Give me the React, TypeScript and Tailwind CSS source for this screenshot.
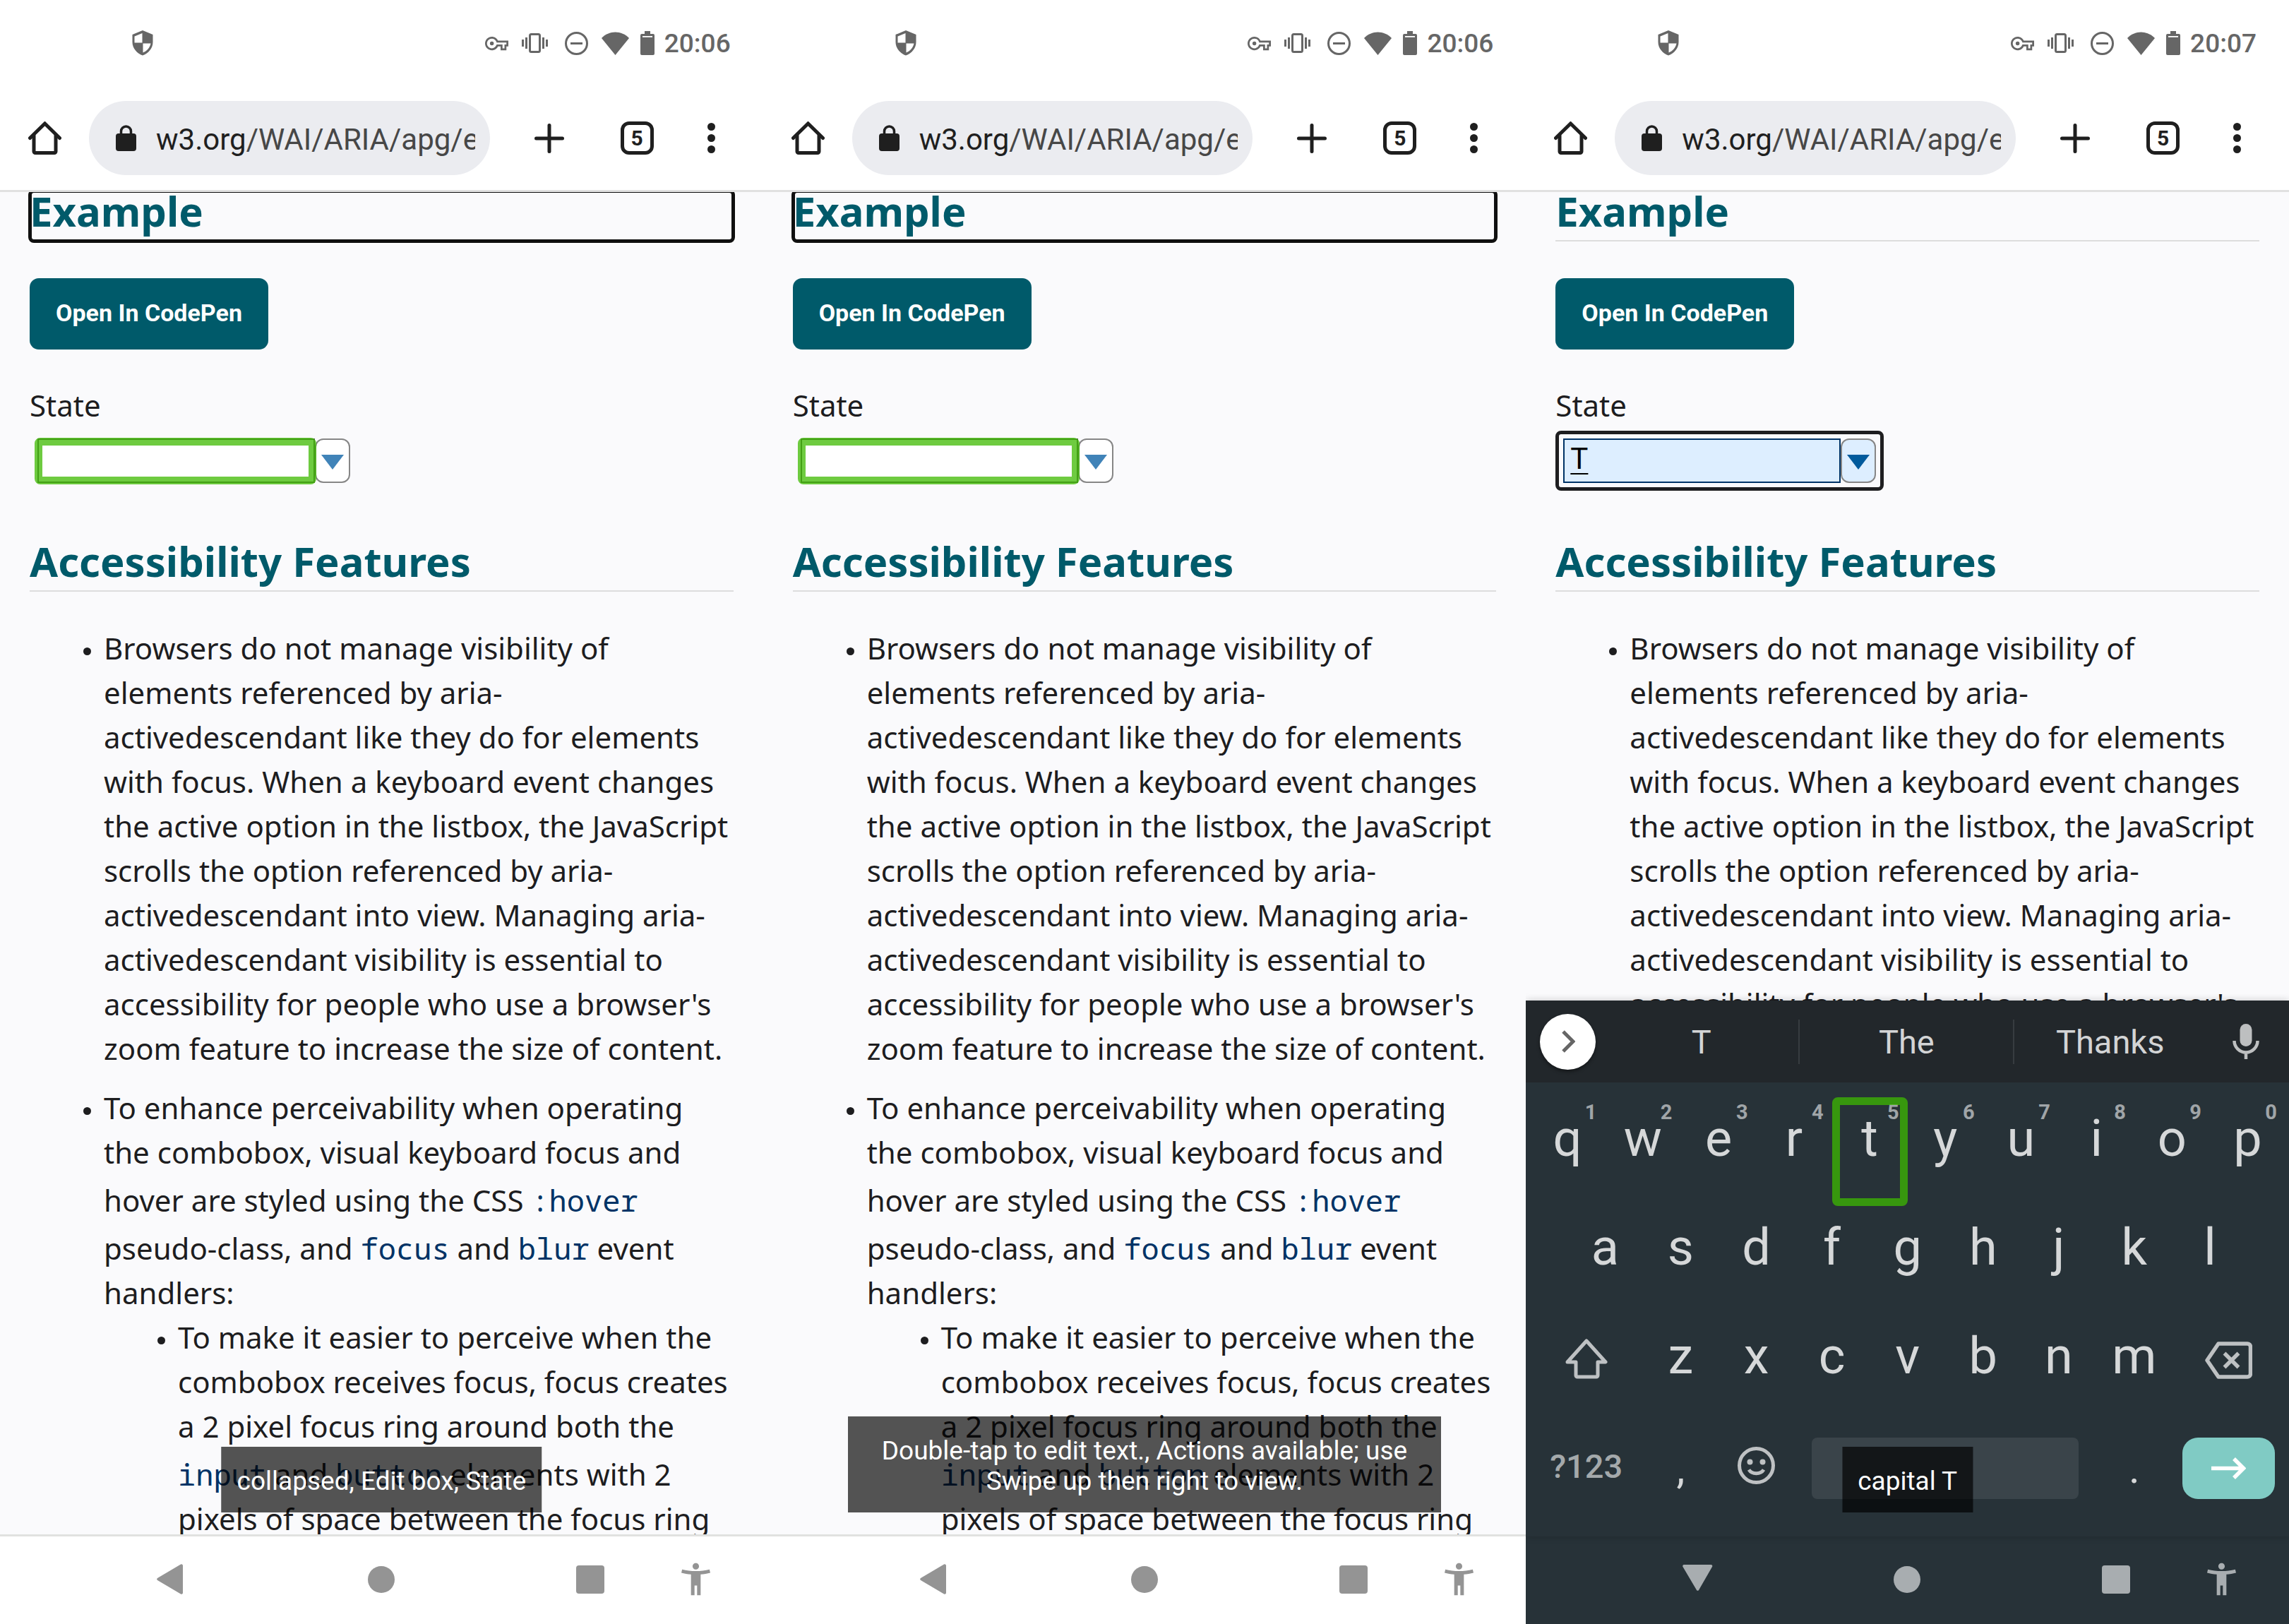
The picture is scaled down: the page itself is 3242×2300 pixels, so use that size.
import React from "react";

const ROBOTO = "font-['Roboto','Liberation_Sans',sans-serif]";

function ShieldIcon() {
  return (
    <svg className="h-9 w-[30px]" viewBox="0 0 30 36" aria-hidden="true">
      <path fill="#666" d="M15 0L29.5 6v10.500c0 8.500-6 16-14.500 19C6.500 32.500.500 25 .500 16.500V6z" />
      <path fill="#fff" d="M14.500 4L3.500 8.500V17.500h11zM15.500 18.500h11c-1.200 6-5.500 11-11 13z" />
    </svg>
  );
}

function StatusIcons() {
  return (
    <div className="flex items-center">
      <svg className="mr-[19px] h-[33px] w-[33px]" viewBox="0 0 24 24" fill="#666" aria-hidden="true">
        <path d="M22 19h-6v-4h-2.680c-1.140 2.420-3.600 4-6.320 4-3.860 0-7-3.140-7-7s3.140-7 7-7c2.720 0 5.170 1.580 6.320 4H24v6h-2v4zm-4-2h2v-4h2v-2H11.940l-.230-.670C11.010 8.340 9.110 7 7 7c-2.760 0-5 2.240-5 5s2.240 5 5 5c2.110 0 4.010-1.340 4.710-3.330l.230-.670H18v4zM7 14a2 2 0 1 1 0-4 2 2 0 0 1 0 4z" />
      </svg>
      <svg className="mr-6 h-7 w-[37px]" viewBox="0 0 37 28" fill="#666" aria-hidden="true">
        <rect x="11.500" y="1.500" width="14" height="25" rx="2" fill="none" stroke="#666" strokeWidth="3" />
        <path d="M0 9h3v10H0zM5 6h3v16H5zM29 6h3v16h-3zM34 9h3v10h-3z" />
      </svg>
      <svg className="mr-[19px] h-[33px] w-[33px]" viewBox="0 0 33 33" fill="none" stroke="#666" strokeWidth="3" aria-hidden="true">
        <circle cx="16.500" cy="16.500" r="15" />
        <path d="M8 16.500h17" />
      </svg>
      <svg className="mr-4 h-[33px] w-[39px]" viewBox="0 0 39 33" fill="#666" aria-hidden="true">
        <path d="M0 9C10.500-2.500 28.500-2.500 39 9L19.500 33z" />
      </svg>
      <svg className="mr-[14px] h-[34px] w-5" viewBox="0 0 20 34" fill="#666" aria-hidden="true">
        <path d="M6 0h8v4h4a2 2 0 0 1 2 2v26a2 2 0 0 1-2 2H2a2 2 0 0 1-2-2V6a2 2 0 0 1 2-2h4z" />
        <path fill="#fff" d="M3 7h14v1.800H3z" />
      </svg>
    </div>
  );
}

function StatusBar({ time }: { time: string }) {
  return (
    <div className="flex h-[122px] items-center justify-between bg-white pl-[187px] pr-[46px]">
      <ShieldIcon />
      <div className="flex items-center">
        <StatusIcons />
        <time className="pt-0.5 text-[37px] leading-[44px] font-medium text-[#666]">{time}</time>
      </div>
    </div>
  );
}

function BrowserBar() {
  return (
    <div className="flex h-[147px] items-center bg-white pl-10 pr-[68px]">
      <button type="button" aria-label="Home" className="mr-[39px] shrink-0">
        <svg className="size-[47px]" viewBox="0 0 47 47" fill="none" stroke="#1f1f1f" strokeWidth="5" strokeLinecap="round" aria-hidden="true">
          <path d="M2.500 23.500L23.500 3L44.500 23.500" strokeLinejoin="miter" />
          <path d="M8 20V42.500a2 2 0 0 0 2 2H37a2 2 0 0 0 2-2V20" />
        </svg>
      </button>
      <button
        type="button"
        aria-label="Address bar"
        className="flex h-[105px] min-w-0 flex-1 items-center gap-7 rounded-full bg-[#ebecf0] pl-[38px] pr-[21px] text-left"
      >
        <svg className="h-[37px] w-[29px] shrink-0" viewBox="0 0 29 37" aria-hidden="true">
          <rect y="12" width="29" height="25" rx="4" fill="#1f1f1f" />
          <path d="M7.500 14V9a7 7 0 0 1 14 0v5" fill="none" stroke="#1f1f1f" strokeWidth="3.500" />
        </svg>
        <span className="min-w-0 flex-1 overflow-hidden pt-1 text-[42px] leading-[56px] whitespace-nowrap text-[#474747]">
          <span className="text-[#1f1f1f]">w3.org</span>/WAI/ARIA/apg/e
        </span>
      </button>
      <button type="button" aria-label="New tab" className="ml-[63px] shrink-0">
        <svg className="size-[42px]" viewBox="0 0 42 42" stroke="#1f1f1f" strokeWidth="5" strokeLinecap="round" aria-hidden="true">
          <path d="M21 2.500v37M2.500 21h37" />
        </svg>
      </button>
      <button
        type="button"
        aria-label="5 open tabs"
        className="ml-20 flex size-[47px] shrink-0 items-center justify-center rounded-xl border-5 border-[#1f1f1f] text-[30px] leading-none font-bold text-[#1f1f1f]"
      >
        5
      </button>
      <button type="button" aria-label="More options" className="ml-[76px] flex shrink-0 flex-col gap-[5px]">
        <span className="size-[11px] rounded-full bg-[#1f1f1f]" />
        <span className="size-[11px] rounded-full bg-[#1f1f1f]" />
        <span className="size-[11px] rounded-full bg-[#1f1f1f]" />
      </button>
    </div>
  );
}

const HEADING = "relative border-b-2 border-[#ddd] pb-[2px] text-[58px] leading-[78px] font-bold text-[#005a6a]";
const CODE = "inline-block pt-[13px] font-['Noto_Sans_Mono','DejaVu_Sans_Mono',monospace] text-[42px] leading-[48px] text-[#036]";
const BULLET =
  "relative before:absolute before:top-[31px] before:-left-[29px] before:size-[11px] before:rounded-full before:bg-[#1d1d1f] before:content-['']";

function Combobox({ id, active }: { id: string; active: boolean }) {
  return (
    <div
      className={
        active
          ? "flex w-fit rounded-lg border-5 border-[#1e1e20] p-[6px]"
          : "flex w-fit rounded-lg border-5 border-transparent p-[6px]"
      }
    >
      <div className="relative">
        <input
          id={id}
          type="text"
          role="combobox"
          aria-expanded="false"
          aria-controls={id + "-list"}
          defaultValue={active ? "T" : ""}
          className={
            active
              ? "block h-[63px] w-[393px] border-2 border-[#036] bg-[#def] px-2 pb-1.5 text-[42px] text-black underline decoration-2 underline-offset-6 outline-none"
              : "block h-[63px] w-[393px] border-2 border-[#555] bg-white px-2 pb-1.5 text-[42px] outline-none"
          }
        />
        {!active && (
          <span className="pointer-events-none absolute -top-px -right-0.5 -bottom-0.5 -left-1 rounded-lg border-11 border-[rgba(62,185,0,0.75)]" />
        )}
      </div>
      <button
        type="button"
        tabIndex={-1}
        aria-label="States"
        className={
          active
            ? "flex h-[63px] w-[50px] items-center justify-center rounded-xl border-2 border-[#868686] bg-[#def] pt-1"
            : "flex h-[63px] w-[50px] items-center justify-center rounded-xl border-2 border-[#868686] bg-white pt-1"
        }
      >
        <svg className="h-[21px] w-8" viewBox="0 0 32 21" aria-hidden="true">
          <path d="M0 0H32L16 21z" fill={active ? "#005a9c" : "#4083b8"} />
        </svg>
      </button>
    </div>
  );
}

function ExamplePage({ id, headingFocused, active }: { id: string; headingFocused: boolean; active: boolean }) {
  return (
    <main className="min-h-0 flex-1 overflow-hidden border-t-3 border-[#e1e1e1] bg-[#fafafc] px-[42px] font-['Noto_Sans',sans-serif] text-[42px] leading-[63px] text-[#1d1d1f]">
      <h2 className={HEADING + " -mt-3"}>
        Example
        {headingFocused && (
          <span className="absolute -inset-x-0.5 top-2 -bottom-1 rounded-lg border-5 border-[#101010] shadow-[0_0_0_2px_#fff]" />
        )}
      </h2>
      <button
        type="button"
        className={"mt-[52px] block h-[101px] rounded-[13px] bg-[#005a6a] px-[37px] pb-1 text-[34px] leading-[44px] font-bold text-white " + ROBOTO}
      >
        Open In CodePen
      </button>
      <label htmlFor={id} className="mt-[47px] mb-[5px] block">
        State
      </label>
      <div className={ROBOTO}>
        <Combobox id={id} active={active} />
      </div>
      <h2 className={HEADING + " mt-[61px]"}>Accessibility Features</h2>
      <ul className="mt-12 flex flex-col gap-[21px] pl-[105px]">
        <li className={BULLET}>
          Browsers do not manage visibility of elements referenced by aria-activedescendant like they do for elements
          with focus. When a keyboard event changes the active option in the listbox, the JavaScript scrolls the option
          referenced by aria-activedescendant into view. Managing aria-activedescendant visibility is essential to
          accessibility for people who use a browser's zoom feature to increase the size of content.
        </li>
        <li className={BULLET}>
          To enhance perceivability when operating the combobox, visual keyboard focus and hover are styled using the
          CSS <code className={CODE}>:hover</code> pseudo-class, and <code className={CODE}>focus</code> and{" "}
          <code className={CODE}>blur</code> event handlers:
          <ul className="pl-[105px]">
            <li className={BULLET}>
              To make it easier to perceive when the combobox receives focus, focus creates a 2 pixel focus ring around
              both the <code className={CODE}>input</code> and <code className={CODE}>button</code> elements with 2
              pixels of space between the focus ring
            </li>
          </ul>
        </li>
      </ul>
    </main>
  );
}

function SystemNav({ keyboardOpen }: { keyboardOpen: boolean }) {
  return (
    <nav
      aria-label="System"
      className={
        keyboardOpen
          ? "flex h-[124px] shrink-0 items-center bg-[#273238] pb-[3px] pl-[222px] text-[#a8adb0]"
          : "flex h-[127px] shrink-0 items-center border-t-3 border-[#e1e2e0] bg-white pb-[3px] pl-[222px] text-[#949494]"
      }
    >
      <button type="button" aria-label={keyboardOpen ? "Hide keyboard" : "Back"}>
        <svg className="size-[43px]" viewBox="0 0 43 43" fill="currentColor" aria-hidden="true">
          {keyboardOpen ? (
            <path d="M2 1h38a2 2 0 0 1 2 3L23 37a2 2 0 0 1-3 0L.500 4A2 2 0 0 1 2 1z" />
          ) : (
            <path d="M34 .500a2 2 0 0 1 3 1.500v39a2 2 0 0 1-3 1.500L1 23a2 2 0 0 1 0-3z" />
          )}
        </svg>
      </button>
      <button type="button" aria-label="Home screen" className="ml-64 size-[38px] rounded-full bg-current" />
      <button type="button" aria-label="Overview" className="ml-[257px] h-10 w-10 rounded-[4px] bg-current" />
      <button type="button" aria-label="Accessibility" className="ml-[109px]">
        <svg className="h-[47px] w-[41px]" viewBox="3 2 18 20" fill="currentColor" aria-hidden="true">
          <path d="M20.500 6c-2.610.700-5.670 1-8.500 1s-5.890-.300-8.500-1L3 8c1.860.500 4 .830 6 1v13h2.200v-6h1.600v6H15V9c2-.170 4.140-.500 6-1l-.500-2zM12 6c1.100 0 2-.900 2-2s-.900-2-2-2-2 .900-2 2 .900 2 2 2z" />
        </svg>
      </button>
    </nav>
  );
}

const KEY_ROW = "grid h-[154px] grid-cols-[repeat(20,minmax(0,1fr))]";
const LETTER = "relative col-span-2 flex items-center justify-center pb-9 text-[72px] leading-[84px] text-[#d6d8d9]";

function Keyboard() {
  const top = "qwertyuiop".split("");
  const home = "asdfghjkl".split("");
  const bottom = "zxcvbnm".split("");
  return (
    <section aria-label="Keyboard" className="relative shrink-0 bg-[#273238] shadow-[0_0_10px_rgba(0,0,0,0.2)]">
      <div className="flex h-[116px] items-center bg-[#22272b] pl-5 text-[47px] leading-[56px] text-[#d3d4d5]">
        <button
          type="button"
          aria-label="Show toolbar"
          className="flex size-[79px] shrink-0 items-center justify-center rounded-full bg-white shadow-[0_3px_5px_rgba(0,0,0,0.4)]"
        >
          <svg className="h-8 w-5" viewBox="0 0 20 32" fill="none" stroke="#666" strokeWidth="5" aria-hidden="true">
            <path d="M3 2L17 16L3 30" />
          </svg>
        </button>
        <div className="ml-3 flex min-w-0 flex-1 items-center">
          <button type="button" className="h-[63px] w-[275px] pt-0.5">T</button>
          <button type="button" className="h-[63px] w-[306px] border-x-2 border-[#373c40] pt-0.5">The</button>
          <button type="button" className="h-[63px] flex-1 pt-0.5">Thanks</button>
        </div>
        <button type="button" aria-label="Voice input" className="ml-[38px] mr-[42px] shrink-0">
          <svg className="h-[50px] w-[38px]" viewBox="0 0 38 50" aria-hidden="true">
            <rect x="10.500" width="17" height="32" rx="8.500" fill="#bdbfc0" />
            <path d="M2.500 24a16.500 16.500 0 0 0 33 0M19 40v10" fill="none" stroke="#bdbfc0" strokeWidth="4.500" />
          </svg>
        </button>
      </div>
      <div className="px-[5px] pt-[21px] pb-[33px]">
        <div className={KEY_ROW}>
          {top.map((letter, i) => (
            <button key={letter} type="button" className={LETTER}>
              {letter}
              <span className="absolute top-[6px] right-3 text-[29px] leading-[30px] font-bold text-[#a0a5a8]">
                {(i + 1) % 10}
              </span>
              {letter === "t" && (
                <span className="absolute inset-0 rounded-lg border-11 border-[rgba(62,185,0,0.75)]" />
              )}
            </button>
          ))}
        </div>
        <div className={KEY_ROW}>
          <span />
          {home.map((letter) => (
            <button key={letter} type="button" className={LETTER}>
              {letter}
            </button>
          ))}
        </div>
        <div className={KEY_ROW}>
          <button type="button" aria-label="Shift" className="col-span-3 flex items-center justify-center pb-[30px]">
            <svg className="h-[58px] w-[60px]" viewBox="0 0 60 58" fill="none" stroke="#bec1c3" strokeWidth="5" strokeLinejoin="round" aria-hidden="true">
              <path d="M30 4L57 34H46V53a2 2 0 0 1-2 2H17a2 2 0 0 1-2-2V34H3z" />
            </svg>
          </button>
          {bottom.map((letter) => (
            <button key={letter} type="button" className={LETTER}>
              {letter}
            </button>
          ))}
          <button type="button" aria-label="Delete" className="col-span-3 flex items-center justify-center pb-[26px]">
            <svg className="h-[53px] w-[67px]" viewBox="0 0 67 53" fill="none" stroke="#bec1c3" strokeWidth="5.500" strokeLinejoin="round" aria-hidden="true">
              <path d="M19 3H60a4.500 4.500 0 0 1 4.500 4.500V45.500a4.500 4.500 0 0 1-4.500 4.500H19L3 26.500z" />
              <path d="M27.500 16.500l20 20M47.500 16.500l-20 20" />
            </svg>
          </button>
        </div>
        <div className="grid h-[127px] grid-cols-[repeat(20,minmax(0,1fr))] items-center text-[60px] leading-[72px] text-[#d6d8d9]">
          <button type="button" className="col-span-3 pb-[6px] text-[47px] leading-[56px] font-medium text-[#a4a9ab]">
            ?123
          </button>
          <button type="button" className="col-span-2">,</button>
          <button type="button" aria-label="Emoji" className="col-span-2 flex justify-center pb-2">
            <svg className="size-[53px]" viewBox="0 0 53 53" fill="#bec1c3" aria-hidden="true">
              <circle cx="26.500" cy="26.500" r="24" fill="none" stroke="#bec1c3" strokeWidth="5" />
              <circle cx="17.500" cy="21.500" r="4" />
              <circle cx="35.500" cy="21.500" r="4" />
              <path d="M16 32.500c4.500 7 16.500 7 21 0" fill="none" stroke="#bec1c3" strokeWidth="5" />
            </svg>
          </button>
          <button type="button" aria-label="Space" className="col-span-8 mx-[25px] h-[87px] rounded-lg bg-[#3a444a]" />
          <button type="button" className="col-span-2">.</button>
          <button type="button" aria-label="Enter" className="col-span-3 mx-[15px] flex h-[87px] items-center justify-center rounded-[22px] bg-[#80cbc4]">
            <svg className="h-[31px] w-[49px]" viewBox="0 0 49 31" fill="none" stroke="#fff" strokeWidth="5.500" aria-hidden="true">
              <path d="M0 15.500H46M32 2l13.500 13.500L32 29" />
            </svg>
          </button>
        </div>
      </div>
    </section>
  );
}

function Toast({ children, wide }: { children: React.ReactNode; wide?: boolean }) {
  return (
    <p
      role="status"
      className={
        wide
          ? "absolute bottom-[158px] left-1/2 w-[840px] -translate-x-1/2 bg-black/67 px-[22px] pt-[27px] pb-[23px] text-center text-[37px] leading-[43px] text-white"
          : "absolute bottom-[158px] left-1/2 -translate-x-1/2 bg-black/67 px-[22px] pt-[27px] pb-[23px] text-center text-[37px] leading-[43px] whitespace-nowrap text-white"
      }
    >
      {children}
    </p>
  );
}

type PhoneProps = {
  id: string;
  time: string;
  message: string;
  wideMessage?: boolean;
  typing?: boolean;
};

function Phone({ id, time, message, wideMessage, typing = false }: PhoneProps) {
  return (
    <div className={"relative flex h-screen min-w-0 flex-col overflow-hidden " + ROBOTO}>
      <header className="shrink-0">
        <StatusBar time={time} />
        <BrowserBar />
      </header>
      <ExamplePage id={id} headingFocused={!typing} active={typing} />
      {typing && <Keyboard />}
      <SystemNav keyboardOpen={typing} />
      <Toast wide={wideMessage}>{message}</Toast>
    </div>
  );
}

export default function App() {
  return (
    <div className="grid grid-cols-3">
      <Phone id="state-1" time="20:06" message="collapsed, Edit box, State" />
      <Phone id="state-2" time="20:06" message="Double-tap to edit text., Actions available; use Swipe up then right to view." wideMessage />
      <Phone id="state-3" time="20:07" message="capital T" typing />
    </div>
  );
}
